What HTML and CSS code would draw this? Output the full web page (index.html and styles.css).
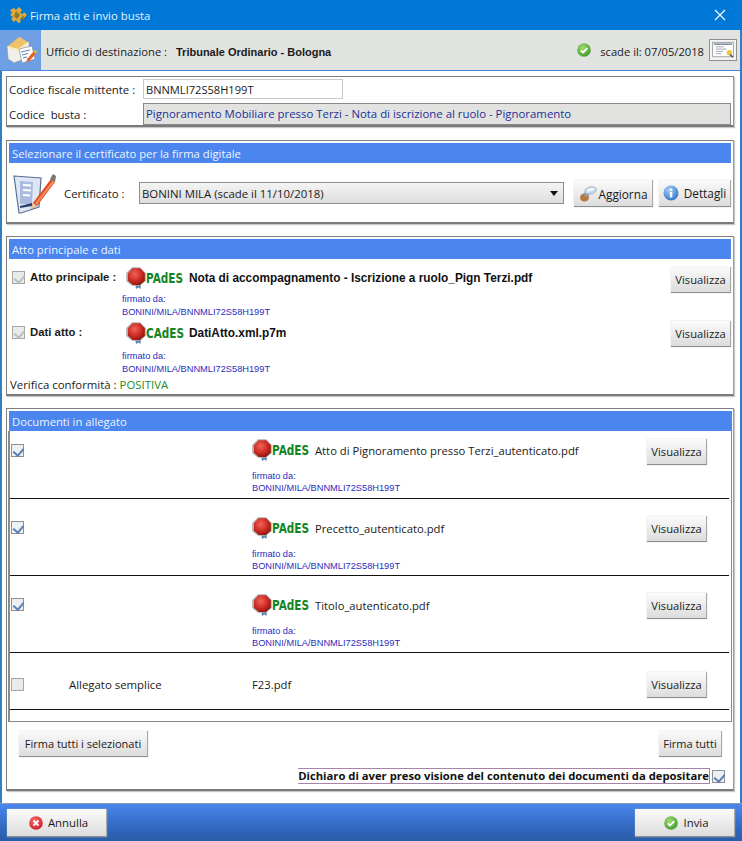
FILE: index.html
```html
<!DOCTYPE html>
<html lang="it">
<head>
<meta charset="utf-8">
<title>Firma atti e invio busta</title>
<link rel="stylesheet" href="styles.css">
</head>
<body>
<svg class="defs" width="0" height="0" aria-hidden="true">
  <defs>
    <radialGradient id="sealRed" cx="40%" cy="35%" r="70%"><stop offset="0" stop-color="#f0635a"/><stop offset=".6" stop-color="#cc2a22"/><stop offset="1" stop-color="#8c1410"/></radialGradient>
    <radialGradient id="greenBall" cx="40%" cy="35%" r="70%"><stop offset="0" stop-color="#a3dc72"/><stop offset="1" stop-color="#3f9a2a"/></radialGradient>
    <radialGradient id="redBall" cx="40%" cy="35%" r="70%"><stop offset="0" stop-color="#f87070"/><stop offset="1" stop-color="#cc1a24"/></radialGradient>
    <radialGradient id="blueBall" cx="40%" cy="30%" r="75%"><stop offset="0" stop-color="#a9d2f5"/><stop offset="1" stop-color="#2b73c6"/></radialGradient>
    <symbol id="seal" viewBox="0 0 20 22">
      <path d="M9 16h6l-.5 6-2-1.500-2.500 1.500z" fill="#5a86b0"/>
      <path d="M6 .3h8L19.800 6v8L14 18.800H6L.2 14V6z" fill="#b0aeae"/>
      <path d="M6.600 1.300h7.600L18.800 6.300v7.400L13.900 18H6.800L2 13.700V6.300z" fill="url(#sealRed)"/>
    </symbol>
    <symbol id="okball" viewBox="0 0 14 14">
      <circle cx="7" cy="7" r="6.800" fill="url(#greenBall)"/>
      <path d="M3.800 7.300l2.200 2.100 4.300-4.200" fill="none" stroke="#fff" stroke-width="1.800"/>
    </symbol>
  </defs>
</svg>
<div class="window">
  <header class="titlebar">
    <svg class="puzzle" viewBox="0 0 20 18" width="20" height="18" aria-hidden="true">
      <path d="M1 4l4-2 2 2 3-3 3 3-2 3 3 1 1-2 3 3-3 3-2-1-2 3 1 2-3 1-2-3-2 2-3-3 2-2-3-2 2-2z" fill="#e0a93a"/>
      <path d="M7 5l4 4-3 4-3-3zM13 9l3 3-3 2z" fill="#8a7a2c"/>
    </svg>
    <span class="title-text">Firma atti e invio busta</span>
    <svg class="close" viewBox="0 0 12 12" width="12" height="12" aria-hidden="true"><path d="M1 1l10 10M11 1L1 11" stroke="#fff" stroke-width="1.100" fill="none"/></svg>
  </header>

  <div class="dest">
    <div class="dest-icon">
      <svg viewBox="0 0 32 32" width="32" height="32" aria-hidden="true">
        <path d="M2 13L15 3l9 6v14L9 29 3 25z" fill="#f0f0ea" stroke="#8b93a8" stroke-width=".7"/>
        <path d="M2 13L14 3l10 6-11 8z" fill="#edc268"/>
        <path d="M2 13l11 4 11-8-1-1-10 7L3 12z" fill="#fff3c8"/>
        <path d="M14 15l13-3 3 13-13 4z" fill="#fff" stroke="#7e8ea8" stroke-width=".7"/>
        <path d="M16 18l9-2M17 21l6-1.500M18 24l4-1" stroke="#5d7fb8" stroke-width="1"/>
        <path d="M22 25l7-8 2.500 2-7 8-3 1z" fill="#e5622a"/>
        <path d="M28.500 17.500l1.500-1.500 2 2-1.500 1.500z" fill="#f2c14a"/>
      </svg>
    </div>
    <span class="dest-label">Ufficio di destinazione :</span>
    <span class="dest-value">Tribunale Ordinario - Bologna</span>
    <svg class="dest-ok" width="14" height="14" aria-hidden="true"><use href="#okball"/></svg>
    <span class="dest-exp">scade il: 07/05/2018</span>
    <div class="cert-btn">
      <svg viewBox="0 0 24 20" width="24" height="20" aria-hidden="true">
        <rect x=".5" y="1.500" width="23" height="16" fill="#fff" stroke="#9a9a9a"/>
        <path d="M2 3.500h20" stroke="#5f6f8a" stroke-width="1.400"/>
        <path d="M4 6.500h9M4 9h12M4 11.500h8M4 14h6" stroke="#9aa3ad"/>
        <circle cx="19" cy="13" r="3" fill="#f0c63e"/>
        <path d="M20 15l3 3" stroke="#33476b" stroke-width="1.500"/>
      </svg>
    </div>
  </div>

  <main class="content">
    <section class="panel panel-code">
      <div class="code-row">
        <span class="code-label">Codice fiscale mittente :</span>
        <div class="input">BNNMLI72S58H199T</div>
      </div>
      <div class="code-row">
        <span class="code-label">Codice&nbsp; busta :</span>
        <div class="readonly">Pignoramento Mobiliare presso Terzi - Nota di iscrizione al ruolo - Pignoramento</div>
      </div>
    </section>

    <section class="panel panel-cert">
      <h2 class="bar">Selezionare il certificato per la firma digitale</h2>
      <div class="cert-row">
        <svg class="cert-pen" viewBox="0 0 46 46" width="46" height="46" aria-hidden="true">
          <path d="M3 6l27 2-2 29-18 6H8z" fill="#dfe6f4" stroke="#5b6e95" stroke-width="1.200"/>
          <path d="M9 11l13 1-1 22H9z" fill="#a9bce0"/>
          <path d="M12 15l8 .5M12 20l8 .5M12 25l7 .5" stroke="#fff" stroke-width="2"/>
          <path d="M9 36l12-3v3l-12 2z" fill="#27406e"/>
          <path d="M22 33l18-24 4 3-18 24-6 3z" fill="#e2461e"/>
          <path d="M24 33l18-23 1.500 2-18 23z" fill="#f28a5a"/>
          <path d="M39 9l3-5 3 2-1 6z" fill="#777"/>
          <path d="M20 39l2-6 4 3z" fill="#e9c79a"/>
        </svg>
        <span class="cert-label">Certificato :</span>
        <div class="select">
          <span>BONINI MILA (scade il 11/10/2018)</span>
          <i class="caret"></i>
        </div>
        <div class="btn btn-aggiorna">
          <svg viewBox="0 0 18 18" width="18" height="18" aria-hidden="true">
            <ellipse cx="5.500" cy="12.500" rx="4.500" ry="4" fill="#b9753c"/>
            <path d="M4 9l4-3 3 3-4 4z" fill="#8f98a0"/>
            <ellipse cx="11.500" cy="5.500" rx="6" ry="3.600" fill="#c4d8ea" stroke="#8fa3b8" stroke-width=".6" transform="rotate(-15 11.500 5.500)"/>
            <ellipse cx="11.500" cy="4.800" rx="3.800" ry="1.600" fill="#eef6fb" transform="rotate(-15 11.500 4.800)"/>
          </svg>
          <span>Aggiorna</span>
        </div>
        <div class="btn btn-dettagli">
          <svg viewBox="0 0 16 16" width="16" height="16" aria-hidden="true">
            <circle cx="8" cy="8" r="7.500" fill="url(#blueBall)"/>
            <rect x="6.900" y="7" width="2.400" height="5.500" fill="#fff"/>
            <circle cx="8.100" cy="4.800" r="1.300" fill="#fff"/>
          </svg>
          <span>Dettagli</span>
        </div>
      </div>
    </section>

    <section class="panel panel-main">
      <h2 class="bar">Atto principale e dati</h2>
      <div class="main-row main-first">
        <i class="check check-off"></i>
        <span class="main-label">Atto principale :</span>
        <div class="sign">
          <div class="sign-head">
            <svg class="seal" width="20" height="22" aria-hidden="true"><use href="#seal"/></svg>
            <span class="sign-type"><b>PAdES</b></span>
            <span class="main-file">Nota di accompagnamento - Iscrizione a ruolo_Pign Terzi.pdf</span>
          </div>
          <div class="signer">firmato da:<br>BONINI/MILA/BNNMLI72S58H199T</div>
        </div>
        <div class="btn btn-vis">Visualizza</div>
      </div>
      <div class="main-row main-second">
        <i class="check check-off"></i>
        <span class="main-label">Dati atto :</span>
        <div class="sign">
          <div class="sign-head">
            <svg class="seal" width="20" height="22" aria-hidden="true"><use href="#seal"/></svg>
            <span class="sign-type"><b>CAdES</b></span>
            <span class="main-file">DatiAtto.xml.p7m</span>
          </div>
          <div class="signer">firmato da:<br>BONINI/MILA/BNNMLI72S58H199T</div>
        </div>
        <div class="btn btn-vis">Visualizza</div>
      </div>
      <div class="verify">Verifica conformità : <span class="positive">POSITIVA</span></div>
    </section>

    <section class="panel panel-docs">
      <h2 class="bar">Documenti in allegato</h2>
      <div class="doclist">
        <div class="doc doc-signed">
          <i class="check check-on"></i>
          <span class="doc-kind"></span>
          <div class="doc-info">
            <div class="sign-head">
              <svg class="seal" width="20" height="22" aria-hidden="true"><use href="#seal"/></svg>
              <span class="sign-type"><b>PAdES</b></span>
              <span class="doc-file">Atto di Pignoramento presso Terzi_autenticato.pdf</span>
            </div>
            <div class="signer">firmato da:<br>BONINI/MILA/BNNMLI72S58H199T</div>
          </div>
          <div class="btn btn-vis">Visualizza</div>
        </div>
        <div class="doc doc-signed">
          <i class="check check-on"></i>
          <span class="doc-kind"></span>
          <div class="doc-info">
            <div class="sign-head">
              <svg class="seal" width="20" height="22" aria-hidden="true"><use href="#seal"/></svg>
              <span class="sign-type"><b>PAdES</b></span>
              <span class="doc-file">Precetto_autenticato.pdf</span>
            </div>
            <div class="signer">firmato da:<br>BONINI/MILA/BNNMLI72S58H199T</div>
          </div>
          <div class="btn btn-vis">Visualizza</div>
        </div>
        <div class="doc doc-signed">
          <i class="check check-on"></i>
          <span class="doc-kind"></span>
          <div class="doc-info">
            <div class="sign-head">
              <svg class="seal" width="20" height="22" aria-hidden="true"><use href="#seal"/></svg>
              <span class="sign-type"><b>PAdES</b></span>
              <span class="doc-file">Titolo_autenticato.pdf</span>
            </div>
            <div class="signer">firmato da:<br>BONINI/MILA/BNNMLI72S58H199T</div>
          </div>
          <div class="btn btn-vis">Visualizza</div>
        </div>
        <div class="doc doc-plain">
          <i class="check check-empty"></i>
          <span class="doc-kind">Allegato semplice</span>
          <div class="doc-info"><span class="doc-file">F23.pdf</span></div>
          <div class="btn btn-vis">Visualizza</div>
        </div>
      </div>
      <div class="sign-actions">
        <div class="btn btn-sel">Firma tutti i selezionati</div>
        <div class="btn btn-all">Firma tutti</div>
      </div>
      <div class="declare">
        <span class="declare-text">Dichiaro di aver preso visione del contenuto dei documenti da depositare</span>
        <i class="check check-on"></i>
      </div>
    </section>
  </main>

  <footer class="footer">
    <div class="btn btn-foot">
      <svg viewBox="0 0 14 14" width="14" height="14" aria-hidden="true">
        <circle cx="7" cy="7" r="6.800" fill="url(#redBall)"/>
        <path d="M4.500 4.500l5 5M9.500 4.500l-5 5" stroke="#fff" stroke-width="1.800"/>
      </svg>
      <span>Annulla</span>
    </div>
    <div class="btn btn-foot">
      <svg width="14" height="14" aria-hidden="true"><use href="#okball"/></svg>
      <span>Invia</span>
    </div>
  </footer>
</div>
</body>
</html>
```
FILE: styles.css
```css
* { box-sizing: border-box; }
html, body { margin: 0; padding: 0; }
body {
  width: 742px;
  height: 841px;
  overflow: hidden;
  background: #fff;
  font-family: "Open Sans", "Noto Sans", sans-serif;
  font-size: 11.4px;
  color: #1a1a1a;
}
.defs { position: absolute; }
.window {
  width: 742px;
  height: 841px;
  display: flex;
  flex-direction: column;
  border-left: 2px solid #2f7fc4;
  border-right: 2px solid #2f7fc4;
}

/* title bar */
.titlebar {
  height: 30px;
  margin: 0 -2px;
  padding: 0 16px 0 9px;
  background: #0078d7;
  color: #fff;
  display: flex;
  align-items: center;
  font-size: 11.35px;
}
.puzzle { margin-right: 1px; flex: none; }
.title-text { flex: 1; color: #e8f2fb; }

/* destination bar */
.dest {
  height: 41px;
  margin-left: -2px;
  background: #e1e3e0;
  border-bottom: 1px solid #4a86d8;
  display: flex;
  align-items: center;
  padding-right: 3px;
}
.dest-icon {
  width: 41px;
  height: 40px;
  background: #6f9fe3;
  display: flex;
  align-items: center;
  justify-content: center;
  margin-right: 5px;
}
.dest-label { width: 130px; padding-top: 3px; font-size: 11.2px; }
.dest-value {
  flex: 1;
  padding-top: 3px;
  font-family: "Liberation Sans", Arial, sans-serif;
  font-weight: bold;
  font-size: 11px;
}
.dest-ok { margin-right: 9px; }
.dest-exp { margin-right: 5px; padding-top: 3px; font-size: 11.2px; }
.cert-btn {
  width: 28px;
  height: 22px;
  background: #f4f4f2;
  border: 1px solid #8f8f8f;
  display: flex;
  align-items: center;
  justify-content: center;
}
.cert-btn svg { width: 24px; height: 18px; }

/* content */
.content {
  flex: 1;
  padding: 5px 4px 0;
  display: flex;
  flex-direction: column;
}
.panel {
  width: 728px;
  border: 1px solid #7d7d7d;
  border-right-color: #9b9b9b;
  border-bottom: 2px solid #7a7a7a;
  padding: 2px;
  box-shadow: 1px 1px 1px #c8c8c8;
}
.bar {
  margin: 0;
  height: 20px;
  background: #4a86ee;
  color: #eef4ff;
  font-size: 11.25px;
  font-weight: normal;
  line-height: 21px;
  padding-left: 3px;
}

/* panel 1 */
.panel-code { height: 51px; margin-bottom: 13px; padding: 2px 2px 0; }
.code-row { display: flex; align-items: center; margin-bottom: 4px; }
.code-label { width: 134px; flex: none; }
.input {
  width: 200px;
  height: 20px;
  border: 1px solid #c9c9c9;
  padding-left: 2px;
  line-height: 19px;
  font-size: 11.1px;
}
.readonly {
  width: 588px;
  height: 22px;
  background: #e2e3e1;
  border: 1px solid #8a8a8a;
  color: #1c2f96;
  padding-left: 2px;
  line-height: 20px;
}

/* panel 2 */
.panel-cert { height: 84px; margin-bottom: 12px; }
.cert-row { display: flex; align-items: center; padding: 7px 0 0 2px; }
.cert-pen { flex: none; margin-right: 7px; }
.cert-label { width: 75px; flex: none; }
.select {
  width: 426px;
  height: 22px;
  border: 1px solid #8c8c8c;
  background: linear-gradient(#f4f4f4, #dedede);
  display: flex;
  align-items: center;
  justify-content: space-between;
  padding: 0 5px 0 2px;
  margin-right: 10px;
}
.caret {
  width: 0;
  height: 0;
  border-left: 4px solid transparent;
  border-right: 4px solid transparent;
  border-top: 5px solid #111;
}
.btn {
  height: 26px;
  background: linear-gradient(#fbfbfb, #dcdcdc);
  border-right: 1px solid #a8a8a8;
  border-bottom: 1px solid #8f8f8f;
  box-shadow: 0 0 1px #bbb;
  display: flex;
  align-items: center;
  justify-content: center;
  flex: none;
  font-size: 11.2px;
}
.btn-aggiorna { width: 79px; height: 27px; margin-right: 6px; gap: 2px; font-size: 11.8px; padding-top: 2px; }
.btn-dettagli { width: 72px; height: 27px; gap: 5px; font-size: 11.8px; padding-top: 0; }

/* panel 3 */
.panel-main { height: 160px; margin-bottom: 12px; }
.main-row { display: flex; align-items: flex-start; padding-left: 3px; }
.main-first { height: 56px; padding-top: 7px; }
.main-second { height: 62px; padding-top: 6px; }
.check {
  flex: none;
  position: relative;
  width: 13px;
  height: 13px;
  margin-top: 5px;
  display: block;
  border: 1px solid #a6a6a6;
  background-color: #e9ebe9;
}
.check-on { color: #5a7fb4; border-color: #8d9094; background-color: #edf0f3; }
.check-off { color: #bdbdbd; }
.check-on::after, .check-off::after {
  content: "";
  position: absolute;
  left: 3px;
  top: 1px;
  width: 5px;
  height: 8px;
  border: solid currentColor;
  border-width: 0 2px 2px 0;
  transform: rotate(40deg);
}
.main-label {
  width: 96px;
  flex: none;
  padding: 5px 0 0 5px;
  font-family: "Liberation Sans", Arial, sans-serif;
  font-weight: bold;
  font-size: 11.35px;
  white-space: nowrap;
}
.sign { flex: none; width: 550px; }
.sign-head { display: flex; align-items: center; height: 23px; padding-left: 5px; }
.seal { flex: none; margin-right: 0; }
.sign-type { width: 38px; flex: none; display: block; margin-right: 5px; }
.sign-type b {
  display: inline-block;
  font-family: "DejaVu Sans", sans-serif;
  font-size: 14px;
  font-weight: bold;
  color: #14841e;
  transform: scaleX(.75);
  transform-origin: left center;
}
.main-file {
  font-family: "Liberation Sans", Arial, sans-serif;
  font-weight: bold;
  font-size: 11.85px;
  color: #111;
}
.signer {
  font-family: "Liberation Sans", Arial, sans-serif;
  font-size: 9.25px;
  line-height: 12.500px;
  color: #2c2cbc;
  margin-top: 6px;
}
.sign .signer { padding-left: 1px; }
.main-first .signer { margin-top: 4px; }
.btn-vis { width: 60px; }
.main-first .btn-vis { margin-top: 1px; }
.verify { padding-left: 1px; }
.positive { color: #1f8a2a; }

/* panel 4 */
.panel-docs { height: 383px; padding: 2px 1px 0 2px; }
.doclist {
  height: 291px;
  margin: 0 0 0 -1px;
  border: 1px solid #8a8a8a;
  border-top: 0;
  border-left-width: 2px;
  padding: 0 2px 0 0;
}
.doc {
  display: grid;
  grid-template-columns: 59px 183px 395px 60px;
  border-bottom: 1px solid #111;
}
.doc-signed { height: 77px; padding-top: 10px; }
.doc-signed:first-child { height: 68px; padding-top: 0; }
.doc-plain { height: 57px; padding-top: 19px; }
.doc .check { margin: 6px 0 0 1px; }
.doc-plain .doc-kind { padding-top: 5px; }
.doc-plain .doc-info { padding-top: 5px; }
.doc .sign-head { padding-left: 0; height: 26px; margin-top: 6px; }
.doc .signer { margin-top: 7px; line-height: 12px; }
.doc-signed .check { margin-top: 13px; }
.doc-signed + .doc-signed .check { margin-top: 12px; }
.doc-signed .btn-vis { margin-top: 7px; }
.doc-signed:first-child .btn-vis { margin-top: 8px; }
.doc-file { font-size: 11.25px; }
.sign-actions {
  display: flex;
  justify-content: space-between;
  padding: 9px 10px 0 10px;
}
.btn-sel { width: 129px; font-size: 11px; }
.btn-all { width: 63px; font-size: 11px; }
.declare {
  display: flex;
  align-items: center;
  justify-content: flex-end;
  gap: 2px;
  padding: 11px 7px 0 0;
}
.declare-text {
  height: 16px;
  line-height: 14px;
  border: 1px solid #a885a8;
  border-left-width: 0;
  font-size: 11.25px;
  font-weight: bold;
  white-space: nowrap;
  color: #111;
}
.declare .check { margin-top: 0; }

/* footer */
.footer {
  height: 38px;
  margin: 0 -2px;
  padding: 5px 7px 0;
  display: flex;
  justify-content: space-between;
  background: linear-gradient(#4a86ee, #2f66ba 70%, #2a5da8);
  border-top: 1px solid #8a9ab2;
}
.btn-foot { width: 100px; height: 28px; gap: 5px; padding-left: 4px; font-size: 11.4px; }
```
